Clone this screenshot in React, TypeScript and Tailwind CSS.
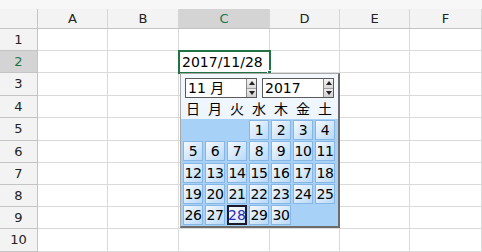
import React from "react";

const colW = ["w-[38px]", "w-[70px]", "w-[71px]", "w-[91px]", "w-[70px]", "w-[70px]", "w-[72px]"];
const colNames = ["A", "B", "C", "D", "E", "F"];
const rowH = ["h-[22px]", "h-[22px]", "h-[23px]", "h-[22px]", "h-[23px]", "h-[22px]", "h-[22px]", "h-[22px]", "h-[22px]", "h-[23px]"];
const weekdays = ["日", "月", "火", "水", "木", "金", "土"];

// November 2017 starts on a Wednesday
const days: (number | null)[] = [null, null, null];
for (let d = 1; d <= 30; d++) days.push(d);
while (days.length < 35) days.push(null);

const Spin = () => (
  <div className="flex flex-col w-[10px] h-full border-l border-[#8a8a8a]">
    <div className="flex-1 flex items-center justify-center bg-gradient-to-b from-[#f4f4f4] to-[#d8d8d8] border-b border-[#a0a0a0]">
      <svg width="6" height="4" viewBox="0 0 6 4">
        <path d="M0 4 L3 0 L6 4 Z" fill="#222" />
      </svg>
    </div>
    <div className="flex-1 flex items-center justify-center bg-gradient-to-b from-[#ececec] to-[#d0d0d0]">
      <svg width="6" height="4" viewBox="0 0 6 4">
        <path d="M0 0 L3 4 L6 0 Z" fill="#222" />
      </svg>
    </div>
  </div>
);

const Select = ({ label }: { label: string }) => (
  <div className="flex items-stretch w-[72px] h-[20px] bg-white border border-[#5a5a5a]">
    <div className="flex-1 pl-[2px] flex items-center text-[14px] text-black leading-none">{label}</div>
    <Spin />
  </div>
);

const Picker = () => (
  <div className="absolute left-[180px] top-[73px] w-[160px] h-[155px] flex flex-col bg-gradient-to-b from-[#f3f8fe] to-[#deedfb] border-l border-t border-[#a8a8a8] border-r-2 border-b-2 border-r-[#6c6c6c] border-b-[#6c6c6c]">
    <div className="flex gap-[5px] pl-[4px] pt-[4px]">
      <Select label="11 月" />
      <Select label="2017" />
    </div>
    <div className="grid grid-cols-[repeat(7,20px)] gap-x-[2px] pl-[2px] h-[21px] items-center">
      {weekdays.map((w) => (
        <div key={w} className="text-center text-[14px] text-black leading-none">
          {w}
        </div>
      ))}
    </div>
    <div className="flex-1 bg-[#a8d1f7] pl-[2px] pt-[1px]">
      <div className="grid grid-cols-[repeat(7,20px)] grid-rows-[repeat(5,20px)] gap-x-[2px] gap-y-[1.25px]">
        {days.map((d, i) =>
          d === null ? (
            <div key={i} />
          ) : d === 28 ? (
            <div
              key={i}
              className="flex items-center justify-center border-2 border-[#1a1a2a] bg-gradient-to-br from-[#f7fbff] to-[#d2e7fb] text-[14px] text-[#2b2bb0] leading-none"
            >
              {d}
            </div>
          ) : (
            <div
              key={i}
              className="flex items-center justify-center border border-[#86b6e4] bg-gradient-to-br from-[#f4f9ff] to-[#b9d9f7] text-[14px] text-black leading-none tracking-[-0.5px]"
            >
              {d}
            </div>
          )
        )}
      </div>
    </div>
  </div>
);

export default function App() {
  return (
    <div className="relative w-[482px] h-[252px] overflow-hidden bg-white font-['DejaVu_Sans','Noto_Sans_CJK_JP',sans-serif]">
      <div className="h-[9px] bg-[#f7f7f7]" />
      <div className="flex h-[20px] bg-[#f3f3f3] border-b border-[#c4c4c4]">
        {colW.map((w, i) => (
          <div
            key={i}
            className={`${w} shrink-0 flex items-center justify-center text-[13px] border-r ${
              i === 0 ? "border-[#c4c4c4]" : "border-[#d6d6d6]"
            } ${i === 3 ? "bg-[#d4d4d4] text-[#217346]" : "text-[#222]"}`}
          >
            {i === 0 ? "" : colNames[i - 1]}
          </div>
        ))}
      </div>
      {rowH.map((h, r) => (
        <div key={r} className={`flex ${h}`}>
          {colW.map((w, c) =>
            c === 0 ? (
              <div
                key={c}
                className={`${w} shrink-0 flex items-center justify-center text-[13px] border-r border-b border-[#c4c4c4] ${
                  r === 1 ? "bg-[#d4d4d4] text-[#217346]" : "bg-[#f3f3f3] text-[#222]"
                }`}
              >
                {r + 1}
              </div>
            ) : (
              <div key={c} className={`${w} shrink-0 border-r border-b border-[#dadada]`} />
            )
          )}
        </div>
      ))}
      <div className="absolute left-[178px] top-[50px] w-[93px] h-[24px] border-2 border-[#217346] bg-white flex items-center pl-[2px] text-[14px] text-black">
        2017/11/28
        <div className="absolute right-[-3px] bottom-[-3px] w-[5px] h-[5px] bg-[#217346] border border-white" />
      </div>
      <Picker />
    </div>
  );
}
